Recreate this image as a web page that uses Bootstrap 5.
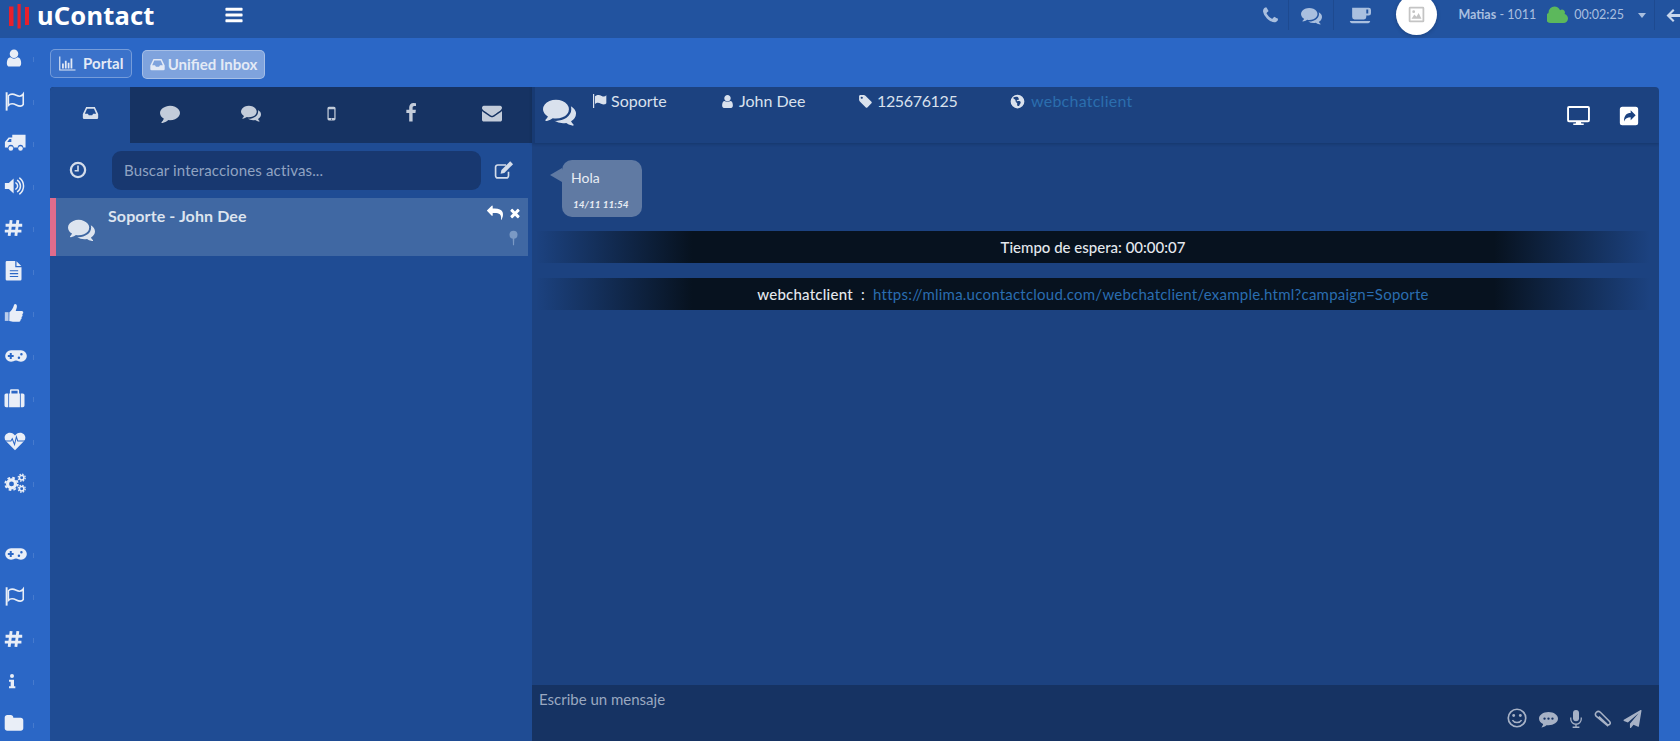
<!DOCTYPE html>
<html lang="es"><head><meta charset="utf-8"><title>uContact</title>
<link href="https://cdn.jsdelivr.net/npm/bootstrap@5.3.0/dist/css/bootstrap.min.css" rel="stylesheet">
<style>
html,body{height:741px;overflow:hidden}
body{background:#2b67c6;font-family:"Lato","Noto Sans",sans-serif;font-size:15px;color:#dfe5ef}
svg{fill:currentColor;flex:none;display:block}
.uc-top{height:38px;background:#22539f;color:#a9bfdf}
.uc-logo{width:224px;height:30px;padding-left:9px;color:#fff;font:700 25.5px/30px "Noto Sans",sans-serif;letter-spacing:.2px}
.uc-logo svg{margin-right:8px;color:#e8202c}
.uc-burger{color:#fff}
.uc-cell{height:30px;display:flex;align-items:center;justify-content:center;border-right:1px solid #1e4a90}
.uc-spacer{flex:1}
.uc-avatar{width:41px;height:41px;margin:-6px 0 0 10px;border-radius:50%;background:#fff;color:#c4c4c4;box-shadow:0 1px 4px rgba(0,0,0,.2)}
.uc-user{font-size:12.5px;color:#a9bfdf;white-space:nowrap;height:30px;padding-left:21px}
.uc-user b{font-weight:700}
.uc-cloudic{margin:0 6px 0 11px;color:#5cb85c}
.uc-caret{margin-left:14px}
.uc-side{width:50px;color:#e9eef7;margin-top:-1px}
.uc-sideitem{height:42.5px;padding-left:4px;display:flex;align-items:center;position:relative}
.uc-sideitem::after{content:"";position:absolute;left:33px;top:20px;width:1px;height:5px;background:rgba(255,255,255,.13)}
.uc-sidegap{height:28px}
.uc-crumbs{height:49px;padding-top:11px;gap:10px}
.uc-crumb{height:29px;padding:0 7px;font-weight:700;font-size:15px;border:1px solid rgba(255,255,255,.3);border-radius:5px;background:rgba(255,255,255,.08);color:#e3eaf6;--bs-btn-hover-color:#e3eaf6;gap:7px;letter-spacing:.1px}
.uc-crumb.uc-on{background:rgba(255,255,255,.4);margin-top:1px;gap:3px;letter-spacing:0}
.uc-panel{height:654px;margin-right:21px;border-radius:4px 4px 0 0;overflow:hidden}
.uc-left{width:482px;background:#1f4c94}
.uc-tabs{height:56px;background:#163363;color:#c3ccda;padding:0}
.uc-tab{flex:1 1 0;display:flex;justify-content:center;padding-top:2px;align-items:center;padding-bottom:6px}
.uc-tab.uc-on{background:#1f4c94;color:#d8e0ec}
.uc-search{height:55px;padding:8px 18px 9px 0;color:#d3dcea}
.uc-searchic{width:62px;padding-right:6px;display:flex;justify-content:center}
.uc-input{flex:1;height:39px;border:0;border-radius:9px;background:#183870;font-size:15px;letter-spacing:.15px;padding:0 12px;color:#90a3c2;margin-right:12px}
.uc-input::placeholder{color:#90a3c2;opacity:1}
.uc-item{height:58px;width:478px;background:#4068a3;border-left:6px solid #e06c8c;color:#dde4ef}
.uc-itemic{width:52px;padding:18px 0 0 12px}
.uc-itemtt{font-weight:700;font-size:16px;padding-top:8px;line-height:20px;letter-spacing:.1px}
.uc-itemact{padding:7px 6px 0 0;color:#fff}
.uc-itemtop{gap:5px}
.uc-pin{color:#7a99c4;margin-top:9px;margin-right:3px}
.uc-right{background:#1c4280;flex:1;min-width:0}
.uc-head{height:56px;border-left:3px solid #173a73;box-shadow:0 1px 3px rgba(10,25,55,.3);position:relative;color:#d9e1ed}
.uc-headmain{padding:0 0 0 8px}
.uc-meta{font-size:16px;line-height:20px;padding-top:4px;gap:4px;white-space:nowrap}
.uc-num{letter-spacing:-.35px}
.uc-meta-link{color:#2b6eae;letter-spacing:.25px;margin-left:2px}
.uc-headact{padding:19px 20px 0 0;gap:29px;color:#fff}
.uc-chat{flex:1;padding-top:17px;min-height:0}
.uc-bubble{position:relative;width:80px;height:57px;margin:0 0 14px 30px;background:#607aa3;border-radius:10px;color:#e8edf4;padding:8px 9px;font-size:14px;line-height:20px}
.uc-bubble::before{content:"";position:absolute;left:-12px;top:8px;border:7px solid transparent;border-left:0;border-right:12px solid #607aa3}
.uc-date{font-size:10px;font-style:italic;font-weight:700;line-height:12px;margin-top:10px;padding-left:2px;white-space:nowrap}
.uc-bar{height:32px;margin:0 9px 15px 4px;font-size:15px;line-height:32px;text-align:center;background:linear-gradient(90deg,transparent,#07121f 14%,#07121f 86%,transparent);color:#e4e8ee}
.uc-bar.uc-wide{letter-spacing:.23px}
.uc-bar a{color:#2a6db0;text-decoration:none}
.uc-bar b{font-weight:500}
.uc-foot{height:56px;background:#163363;padding:3px 7px;color:#9aa8c0;position:relative;font-size:15px}
.uc-footic{position:absolute;right:17px;bottom:13px;gap:12px;color:#a7b2c6}
.uc-sep{width:1px;height:30px;background:#1e4a90}
.uc-wcell{width:37px}
.uc-mcell{width:45px}
.uc-ccell{width:52px}
.uc-back{height:30px;padding-left:10px;color:#c8d6ec}
.uc-w1{margin-left:15px;width:129px}
.uc-w2{width:138px}
.uc-w3{width:152px}
</style></head>
<body>
<svg width="0" height="0" class="position-absolute">
<defs>
<symbol id="i-comment" viewBox="0 0 1792 1792"><path d="M1792 896q0 174-120 321.5t-326 233-450 85.5q-70 0-145-8-198 175-460 242-49 14-114 22-17 2-30.5-9t-17.5-29v-1q-3-4-.5-12t2-10 4.5-9.5l6-9 7-8.5 8-9q7-8 31-34.5t34.5-38 31-39.5 32.5-51 27-59 26-76q-157-89-247.5-220t-90.5-281q0-130 71-248.5t191-204.5 286-136.5 348-50.5q244 0 450 85.5t326 233 120 321.5z"/></symbol>
<symbol id="i-comments" viewBox="0 0 1792 1792"><path d="M1408 768q0 139-94 257t-256.5 186.5-353.5 68.5q-86 0-176-16-124 88-278 128-36 9-86 16h-3q-11 0-20.5-8t-11.5-21q-1-3-1-6.5t.5-6.5 2-6l2.5-5 3.5-5.5 4-5 4.5-5 4-4.5q5-6 23-25t26-29.5 22.5-29 25-38.5 20.5-44q-124-72-195-177t-71-224q0-139 94-257t256.5-186.5 353.5-68.5 353.5 68.5 256.5 186.5 94 257zm384 256q0 120-71 224.5t-195 176.5q10 24 20.5 44t25 38.5 22.5 29 26 29.5 23 25q1 1 4 4.5t4.5 5 4 5 3.5 5.5l2.5 5 2 6 .5 6.5-1 6.5q-3 14-13 22t-22 7q-50-7-86-16-154-40-278-128-90 16-176 16-271 0-472-132 58 4 88 4 161 0 309-45t264-129q125-92 192-212t67-254q0-77-23-152 129 71 204 178t75 230z"/></symbol>
<symbol id="i-user" viewBox="0 0 1792 1792"><path d="M1536 1399q0 109-62.5 187t-150.5 78h-854q-88 0-150.5-78t-62.5-187q0-85 8.5-160.5t31.5-152 58.5-131 94-89 134.5-34.5q131 128 313 128t313-128q76 0 134.5 34.5t94 89 58.5 131 31.5 152 8.5 160.5zm-256-887q0 159-112.5 271.5t-271.5 112.5-271.5-112.5-112.5-271.5 112.5-271.5 271.5-112.5 271.5 112.5 112.5 271.5z"/></symbol>
<symbol id="i-envelope" viewBox="0 0 1792 1792"><path d="M1792 710v794q0 66-47 113t-113 47h-1472q-66 0-113-47t-47-113v-794q44 49 101 87 362 246 497 345 57 42 92.5 65.5t94.5 48 110 24.5h2q51 0 110-24.5t94.5-48 92.5-65.5q170-123 498-345 57-39 100-87zm0-294q0 79-49 151t-122 123q-376 261-468 325-10 7-42.5 30.5t-54 38-52 32.5-57.5 27-50 9h-2q-23 0-50-9t-57.5-27-52-32.5-54-38-42.5-30.5q-91-64-262-182.5t-205-142.5q-62-42-117-115.5t-55-136.5q0-78 41.5-130t118.5-52h1472q65 0 112.5 47t47.5 113z"/></symbol>
<symbol id="i-phone" viewBox="0 0 1792 1792"><path d="M1600 1240q0 27-10 70.5t-21 68.5q-21 50-122 106-94 51-186 51-27 0-53-3.5t-57.5-12.5-47-14.5-55.5-20.5-49-18q-98-35-175-83-127-79-264-216t-216-264q-48-77-83-175-3-9-18-49t-20.5-55.5-14.5-47-12.5-57.5-3.5-53q0-92 51-186 56-101 106-122 25-11 68.5-21t70.5-10q14 0 21 3 18 6 53 76 11 19 30 54t35 63.5 31 53.5q3 4 17.5 25t21.5 35.5 7 28.5q0 20-28.5 50t-62 55-62 53-28.5 46q0 9 5 22.5t8.5 20.5 14 24 11.5 19q76 137 174 235t235 174q2 1 19 11.5t24 14 20.5 8.5 22.5 5q18 0 46-28.5t53-62 55-62 50-28.5q14 0 28.5 7t35.5 21.5 25 17.5q25 15 53.5 31t63.5 35 54 30q70 35 76 53 3 7 3 21z"/></symbol>
<symbol id="i-times" viewBox="0 0 1792 1792"><path d="M1490 1322q0 40-28 68l-136 136q-28 28-68 28t-68-28l-294-294-294 294q-28 28-68 28t-68-28l-136-136q-28-28-28-68t28-68l294-294-294-294q-28-28-28-68t28-68l136-136q28-28 68-28t68 28l294 294 294-294q28-28 68-28t68 28l136 136q28 28 28 68t-28 68l-294 294 294 294q28 28 28 68z"/></symbol>
<symbol id="i-reply" viewBox="0 0 1792 1792"><path d="M1792 1120q0 166-127 451-3 7-10.5 24t-13.5 30-13 22q-12 17-28 17-15 0-23.5-10t-8.5-25q0-9 2.5-26.5t2.5-23.5q5-68 5-123 0-101-17.5-181t-48.5-138.5-80-101-105.5-69.5-133-42.5-154-21.5-175.5-6h-224v256q0 26-19 45t-45 19-45-19l-512-512q-19-19-19-45t19-45l512-512q19-19 45-19t45 19 19 45v256h224q713 0 875 403 53 134 53 333z"/></symbol>
<symbol id="i-plane" viewBox="0 0 1792 1792"><path d="M1764 11q33 24 27 64l-256 1536q-5 29-32 45-14 8-31 8-11 0-24-5l-453-185-242 295q-18 23-49 23-13 0-22-4-19-7-30.5-23.5t-11.5-36.5v-349l864-1059-1069 925-395-162q-37-14-40-55-2-40 32-59l1664-960q15-9 32-9 20 0 36 11z"/></symbol>
<symbol id="i-tag" viewBox="0 0 1792 1792"><path d="M576 448q0-53-37.5-90.5t-90.5-37.5-90.5 37.5-37.5 90.5 37.5 90.5 90.5 37.5 90.5-37.5 37.5-90.5zm1067 576q0 53-37 90l-491 492q-39 37-91 37-53 0-90-37l-715-716q-38-37-64.5-101t-26.5-117v-416q0-52 38-90t90-38h416q53 0 117 26.5t102 64.5l715 714q37 39 37 91z"/></symbol>
<symbol id="i-folder" viewBox="0 0 1792 1792"><path d="M1728 608v704q0 92-66 158t-158 66h-1216q-92 0-158-66t-66-158v-960q0-92 66-158t158-66h320q92 0 158 66t66 158v32h672q92 0 158 66t66 158z"/></symbol>
<symbol id="i-cloud" viewBox="0 0 1792 1792"><path d="M1792 1152q0 159-112.5 271.5t-271.5 112.5h-1088q-185 0-316.5-131.5t-131.5-316.5q0-132 71-241.5t187-163.5q-2-28-2-43 0-212 150-362t362-150q158 0 286.5 88t187.5 230q70-62 166-62 106 0 181 75t75 181q0 75-41 138 129 30 213 134.5t84 239.5z"/></symbol>
<symbol id="i-bars" viewBox="0 0 1792 1792"><path d="M1664 1344v128q0 26-19 45t-45 19h-1408q-26 0-45-19t-19-45v-128q0-26 19-45t45-19h1408q26 0 45 19t19 45zm0-512v128q0 26-19 45t-45 19h-1408q-26 0-45-19t-19-45v-128q0-26 19-45t45-19h1408q26 0 45 19t19 45zm0-512v128q0 26-19 45t-45 19h-1408q-26 0-45-19t-19-45v-128q0-26 19-45t45-19h1408q26 0 45 19t19 45z"/></symbol>
<symbol id="i-fb" viewBox="0 0 1792 1792"><path d="M1343 12v264h-157q-86 0-116 36t-30 108v189h293l-39 296h-254v759h-306v-759h-255v-296h255v-218q0-186 104-288.5t277-102.5q147 0 228 12z"/></symbol>
<symbol id="i-flag-o" viewBox="0 0 24 24"><path d="M3 2v21" fill="none" stroke="currentColor" stroke-width="2.200"/><path d="M5 6c3-3 6-2 9-.5s6 1.500 8-1.500v12c-2 3-5 2-8 .5s-6-2.500-9 .5z" fill="none" stroke="currentColor" stroke-width="1.800"/></symbol>
<symbol id="i-flag" viewBox="0 0 24 24"><path d="M3 1.500h1.800v21H3z"/><path d="M6 5c4-3 7-2 10-.5s5 1 7-1v12c-2 2.500-5 2-8 .5s-6-2.500-9 .5z"/></symbol>
<symbol id="i-truck" viewBox="0 0 24 24"><path fill-rule="evenodd" d="M9 3h14.500v14H21a3 3 0 0 0-6 0h-4.500a3 3 0 0 0-6 0H1v-6l4-5h4zM3.500 11H8V7.500H6z"/><circle cx="7.500" cy="18" r="2.500"/><circle cx="18" cy="18" r="2.500"/></symbol>
<symbol id="i-volume" viewBox="0 0 24 24"><path d="M1 8.500h4.500L11 3.500v17l-5.500-5H1z"/><path d="M13.500 8.500a4 4 0 0 1 0 7M15.500 5.500a8 8 0 0 1 0 13M18 3a11.500 11.500 0 0 1 0 18" fill="none" stroke="currentColor" stroke-width="1.700" stroke-linecap="round"/></symbol>
<symbol id="i-file" viewBox="0 0 24 24"><path fill-rule="evenodd" d="M3 0h10.500v7.500H21V22a1.500 1.500 0 0 1-1.500 1.500h-16A1.500 1.500 0 0 1 2 22V1.500A1.500 1.500 0 0 1 3 0zM7 11v1.300h10V11zM7 14.500v1.300h10v-1.300zM7 18v1.300h10V18z"/><path d="M15 .3 20.700 6H15z"/></symbol>
<symbol id="i-thumb" viewBox="0 0 24 24"><path d="M1 11h4.500v10.500H1z" opacity=".75"/><path d="M6.500 11c2.500-1.500 4.500-4.500 5.500-8.500.5-2 3.500-1.500 3.500 1.500 0 2-.8 3.500-1.500 5.500h7c2.500 0 2.800 3 .8 3.800 1 1.300.5 3-.8 3.500.5 1.500 0 2.800-1.200 3.200.2 1.700-.8 2.500-2.500 2.500h-5c-2.500 0-3.500-1-6-1z"/></symbol>
<symbol id="i-game" viewBox="0 0 28 24"><path fill-rule="evenodd" d="M8 5h12a7 7 0 0 1 0 14c-2.500 0-3.500-1.500-6-1.500S10.500 19 8 19A7 7 0 0 1 8 5zM6.500 8.500v2.300H4.200v2.400h2.300v2.300h2.400v-2.300h2.300v-2.400H8.900V8.500zM20.500 8.500a1.500 1.500 0 1 0 0 3 1.500 1.500 0 0 0 0-3zM17.500 12.500a1.500 1.500 0 1 0 0 3 1.500 1.500 0 0 0 0-3z"/></symbol>
<symbol id="i-case" viewBox="0 0 24 24"><path fill-rule="evenodd" d="M8 1.500h8A1.500 1.500 0 0 1 17.500 3v3.500H22a2 2 0 0 1 2 2V21a2 2 0 0 1-2 2H2a2 2 0 0 1-2-2V8.500a2 2 0 0 1 2-2h4.500V3A1.500 1.500 0 0 1 8 1.500zM8.300 3.300v3.200h7.400V3.300zM4.500 6.500V23h1V6.500zM18.500 6.500V23h1V6.500z"/></symbol>
<symbol id="i-heart" viewBox="0 0 24 24"><path d="M12 22 2 12C-1 8.500 1.500 3 6.500 3c2.500 0 4.200 1.300 5.500 3 1.300-1.700 3-3 5.500-3C22.500 3 25 8.500 22 12z"/><path d="M1 12h6.500l1.500-2.500 2.500 6.500 2-8.500 1.500 4.500H23" fill="none" stroke="#2b67c6" stroke-width="1.100"/></symbol>
<symbol id="i-cogs" viewBox="0 0 26 24"><g fill="none" stroke="currentColor"><circle cx="8.500" cy="13" r="4.500" stroke-width="3.500"/><circle cx="8.500" cy="13" r="7" stroke-width="2.200" stroke-dasharray="3 2.500"/><circle cx="20" cy="6" r="2.500" stroke-width="1.700"/><circle cx="20" cy="6" r="4" stroke-width="1.400" stroke-dasharray="1.700 1.450"/><circle cx="20" cy="18.500" r="2.500" stroke-width="1.700"/><circle cx="20" cy="18.500" r="4" stroke-width="1.400" stroke-dasharray="1.700 1.450"/></g></symbol>
<symbol id="i-hash" viewBox="0 0 24 24"><path d="M9 2 6.500 22M17.500 2 15 22M2 8.500h21M1 16h21" fill="none" stroke="currentColor" stroke-width="3.600"/></symbol>
<symbol id="i-info" viewBox="0 0 24 24"><circle cx="12" cy="4.500" r="3"/><path d="M7.500 10h7.500v10h2v3H7.500v-3h2.500v-7H7.500z"/></symbol>
<symbol id="i-chart" viewBox="0 0 24 24"><path d="M1 2h1.600v18.500H24V22H1z"/><path d="M5 12h2.500v7H5zM9 8h2.500v11H9zM13 11h2.500v8H13zM17 5h2.500v14H17z"/></symbol>
<symbol id="i-inbox" viewBox="0 0 24 24"><path fill-rule="evenodd" d="M5.500 3h13l5 10.500V19a2 2 0 0 1-2 2h-19a2 2 0 0 1-2-2v-5.500zM6.800 5.500 3.500 13H8l1.500 2.500h5L16 13h4.500l-3.300-7.500z"/></symbol>
<symbol id="i-mobile" viewBox="0 0 24 24"><path fill-rule="evenodd" d="M8 1h8a2.500 2.500 0 0 1 2.500 2.500v17A2.500 2.500 0 0 1 16 23H8a2.500 2.500 0 0 1-2.500-2.500v-17A2.500 2.500 0 0 1 8 1zM7.500 5v14h9V5zM12 19.800a1 1 0 1 0 0 2 1 1 0 0 0 0-2z"/></symbol>
<symbol id="i-clock" viewBox="0 0 24 24"><circle cx="12" cy="12" r="9.500" fill="none" stroke="currentColor" stroke-width="3"/><path d="M12 6v7H7.500" fill="none" stroke="currentColor" stroke-width="2.200"/></symbol>
<symbol id="i-edit" viewBox="0 0 24 24"><path d="M18 14v5a2.500 2.500 0 0 1-2.500 2.500H5A2.500 2.500 0 0 1 2.500 19V8.500A2.500 2.500 0 0 1 5 6h10" fill="none" stroke="currentColor" stroke-width="2"/><path d="M20 1.500 23.500 5 13 15.500l-4.500 1 1-4.500z"/></symbol>
<symbol id="i-pin" viewBox="0 0 16 24"><circle cx="8" cy="7" r="6"/><path d="M6.800 12h2.400l-.4 11H7.200z"/></symbol>
<symbol id="i-coffee" viewBox="0 0 28 24"><path fill-rule="evenodd" d="M4 2h21a3 3 0 0 1 3 3v4a3 3 0 0 1-3 3h-3v2a3 3 0 0 1-3 3H7a3 3 0 0 1-3-3zM22 4.500V9.500h2.500V4.500z"/><path d="M1 19h26c0 2-2 3-4 3H5c-2 0-4-1-4-3z"/></symbol>
<symbol id="i-pic" viewBox="0 0 24 24"><path fill-rule="evenodd" d="M3 1h18a2 2 0 0 1 2 2v18a2 2 0 0 1-2 2H3a2 2 0 0 1-2-2V3a2 2 0 0 1 2-2zM3.500 3.500v17h17v-17zM5 18l4-6 3 3 3-5 4 8zM8 6a2 2 0 1 1 0 4 2 2 0 0 1 0-4z"/></symbol>
<symbol id="i-globe" viewBox="0 0 24 24"><path fill-rule="evenodd" d="M12 1a11 11 0 1 1 0 22 11 11 0 0 1 0-22zM5 6c1 3 4 2 4 5s3 2 2.500 5 1.500 4 3 3c1-3 3-4 2.500-6s-4-2-6-1c-1-2 1-3 3-3 1-2-1-2-1-4-3-1-6-.5-8 1z"/></symbol>
<symbol id="i-monitor" viewBox="0 0 24 20"><path fill-rule="evenodd" d="M2 0h20a2 2 0 0 1 2 2v13a2 2 0 0 1-2 2h-7.500l.5 1.500h2.500V20h-11v-1.500H9l.5-1.500H2a2 2 0 0 1-2-2V2a2 2 0 0 1 2-2zM2 2v13h20V2z"/></symbol>
<symbol id="i-share" viewBox="0 0 24 24"><path fill-rule="evenodd" d="M4 1h16a3 3 0 0 1 3 3v16a3 3 0 0 1-3 3H4a3 3 0 0 1-3-3V4a3 3 0 0 1 3-3zM14 5v3.500c-5 0-8 3-8 10 1.500-3.500 4-5 8-5V17l6-6z"/></symbol>
<symbol id="i-smile" viewBox="0 0 24 24"><circle cx="12" cy="12" r="10.500" fill="none" stroke="currentColor" stroke-width="2"/><circle cx="8" cy="9" r="1.700"/><circle cx="16" cy="9" r="1.700"/><path d="M6.500 14.500c2.500 4 8.500 4 11 0" fill="none" stroke="currentColor" stroke-width="1.800"/></symbol>
<symbol id="i-dots" viewBox="0 0 24 22"><path fill-rule="evenodd" d="M12 2c6.600 0 12 3.600 12 8.500S18.600 19 12 19c-1 0-1.800 0-2.600-.2C7.500 20.500 5 21.500 3 21.700c1-1.200 2-2.700 2.200-4.300C2 16 0 13.500 0 10.500 0 5.600 5.400 2 12 2zM7 9a1.500 1.500 0 1 0 0 3 1.500 1.500 0 0 0 0-3zM12 9a1.500 1.500 0 1 0 0 3 1.500 1.500 0 0 0 0-3zM17 9a1.500 1.500 0 1 0 0 3 1.500 1.500 0 0 0 0-3z"/></symbol>
<symbol id="i-mic" viewBox="0 0 16 24"><rect x="4" y="0" width="8" height="15" rx="4"/><path d="M1 10v2a7 7 0 0 0 14 0v-2M8 19v3M3.500 23h9" fill="none" stroke="currentColor" stroke-width="1.700"/></symbol>
<symbol id="i-clip" viewBox="0 0 24 24"><path d="M20 22 3 8C0 4 5-1 9 2.500l13 13c2.500 3-1 6-3.500 4L7 8.500" fill="none" stroke="currentColor" stroke-width="2.200"/></symbol>
<symbol id="i-logo" viewBox="0 0 20 26"><path d="M0 4h4.500v19.500H0zM8.500 1.500h3.200V26H8.500zM16 4.500h4v18h-4z"/></symbol>
</defs></svg>

<header class="uc-top d-flex align-items-start">
  <div class="uc-logo d-flex align-items-center"><svg width="20" height="27"><use href="#i-logo"/></svg>uContact</div>
  <svg class="uc-burger mt-1" width="20" height="22"><use href="#i-bars"/></svg>
  <div class="uc-spacer"></div>
  <div class="d-flex align-items-start">
    <div class="uc-cell uc-wcell"><svg width="19" height="19"><use href="#i-phone"/></svg></div>
    <div class="uc-cell uc-mcell"><svg width="21" height="21"><use href="#i-comments"/></svg></div>
    <div class="uc-cell uc-ccell border-0"><svg width="22" height="19"><use href="#i-coffee"/></svg></div>
    <div class="uc-avatar d-flex align-items-center justify-content-center"><svg width="17" height="17"><use href="#i-pic"/></svg></div>
    <div class="uc-user d-flex align-items-center"><b>Matias</b>&nbsp;- 1011
      <svg class="uc-cloudic" width="21" height="21"><use href="#i-cloud"/></svg>
      <span>00:02:25</span>
      <svg class="uc-caret" width="8" height="5" viewBox="0 0 10 6"><path d="M0 0h10L5 6z"/></svg>
    </div>
    <div class="uc-sep ms-2"></div>
    <div class="uc-back d-flex align-items-center"><svg width="15" height="15" viewBox="0 0 15 15"><path d="M8 1 1.500 7.500 8 14l1.500-1.500-3.500-3.500H15V6H6l3.500-3.500z"/></svg></div>
  </div>
</header>

<div class="d-flex">
  <nav class="uc-side d-flex flex-column">
    <div class="uc-sideitem"><svg width="20" height="20"><use href="#i-user"/></svg></div>
    <div class="uc-sideitem"><svg width="21" height="22"><use href="#i-flag-o"/></svg></div>
    <div class="uc-sideitem"><svg width="22" height="22"><use href="#i-truck"/></svg></div>
    <div class="uc-sideitem"><svg width="21" height="22"><use href="#i-volume"/></svg></div>
    <div class="uc-sideitem"><svg width="19" height="20"><use href="#i-hash"/></svg></div>
    <div class="uc-sideitem"><svg width="20" height="20"><use href="#i-file"/></svg></div>
    <div class="uc-sideitem"><svg width="20" height="20"><use href="#i-thumb"/></svg></div>
    <div class="uc-sideitem"><svg width="24" height="20"><use href="#i-game"/></svg></div>
    <div class="uc-sideitem"><svg width="21" height="20"><use href="#i-case"/></svg></div>
    <div class="uc-sideitem"><svg width="22" height="22"><use href="#i-heart"/></svg></div>
    <div class="uc-sideitem"><svg width="23" height="22"><use href="#i-cogs"/></svg></div>
    <div class="uc-sidegap"></div>
    <div class="uc-sideitem"><svg width="24" height="20"><use href="#i-game"/></svg></div>
    <div class="uc-sideitem"><svg width="21" height="22"><use href="#i-flag-o"/></svg></div>
    <div class="uc-sideitem"><svg width="19" height="20"><use href="#i-hash"/></svg></div>
    <div class="uc-sideitem"><svg width="16" height="18"><use href="#i-info"/></svg></div>
    <div class="uc-sideitem"><svg width="20" height="21"><use href="#i-folder"/></svg></div>
  </nav>
  <main class="flex-grow-1">
    <div class="uc-crumbs d-flex align-items-start">
      <a class="btn uc-crumb d-inline-flex align-items-center" href="#"><svg width="18" height="17"><use href="#i-chart"/></svg>Portal</a>
      <a class="btn uc-crumb uc-on d-inline-flex align-items-center" href="#"><svg width="15" height="15"><use href="#i-inbox"/></svg>Unified Inbox</a>
    </div>
    <div class="uc-panel d-flex">
      <section class="uc-left d-flex flex-column">
        <ul class="nav uc-tabs list-unstyled m-0">
          <li class="uc-tab uc-on"><svg width="17" height="16"><use href="#i-inbox"/></svg></li>
          <li class="uc-tab"><svg width="20" height="20"><use href="#i-comment"/></svg></li>
          <li class="uc-tab"><svg width="20" height="20"><use href="#i-comments"/></svg></li>
          <li class="uc-tab"><svg width="15" height="15"><use href="#i-mobile"/></svg></li>
          <li class="uc-tab"><svg width="20" height="20"><use href="#i-fb"/></svg></li>
          <li class="uc-tab"><svg width="20" height="20"><use href="#i-envelope"/></svg></li>
        </ul>
        <div class="uc-search d-flex align-items-center">
          <div class="uc-searchic"><svg width="18" height="18"><use href="#i-clock"/></svg></div>
          <input class="form-control uc-input" type="text" placeholder="Buscar interacciones activas...">
          <svg width="21" height="20"><use href="#i-edit"/></svg>
        </div>
        <div class="uc-item d-flex">
          <div class="uc-itemic"><svg width="27" height="27"><use href="#i-comments"/></svg></div>
          <div class="uc-itemtt flex-grow-1">Soporte - John Dee</div>
          <div class="uc-itemact d-flex flex-column align-items-end">
            <div class="uc-itemtop d-flex align-items-center"><svg width="16" height="16"><use href="#i-reply"/></svg><svg width="14" height="14"><use href="#i-times"/></svg></div>
            <svg class="uc-pin" width="11" height="16"><use href="#i-pin"/></svg>
          </div>
        </div>
      </section>
      <section class="uc-right d-flex flex-column">
        <div class="uc-head d-flex">
          <div class="uc-headmain d-flex flex-grow-1 align-items-start">
            <svg class="mt-2" width="33" height="33"><use href="#i-comments"/></svg>
            <div class="uc-meta uc-w1 d-flex align-items-center"><svg width="16" height="16"><use href="#i-flag"/></svg>Soporte</div>
            <div class="uc-meta uc-w2 d-flex align-items-center"><svg width="15" height="15"><use href="#i-user"/></svg>John Dee</div>
            <div class="uc-meta uc-w3 d-flex align-items-center"><svg width="15" height="15"><use href="#i-tag"/></svg><span class="uc-num">125676125</span></div>
            <div class="uc-meta d-flex align-items-center"><svg width="15" height="15"><use href="#i-globe"/></svg><span class="uc-meta-link">webchatclient</span></div>
          </div>
          <div class="uc-headact d-flex align-items-start">
            <svg width="23" height="19"><use href="#i-monitor"/></svg>
            <svg width="20" height="20"><use href="#i-share"/></svg>
          </div>
        </div>
        <div class="uc-chat">
          <div class="uc-bubble">Hola<div class="uc-date">14/11 11:54</div></div>
          <div class="uc-bar"><b>Tiempo de espera: 00:00:07</b></div>
          <div class="uc-bar uc-wide"><b>webchatclient</b> &nbsp;:&nbsp; <a href="#">https://mlima.ucontactcloud.com/webchatclient/example.html?campaign=Soporte</a></div>
        </div>
        <div class="uc-foot">Escribe un mensaje
          <div class="uc-footic d-flex align-items-end">
            <svg width="20" height="20"><use href="#i-smile"/></svg>
            <svg width="19" height="18"><use href="#i-dots"/></svg>
            <svg width="12" height="18"><use href="#i-mic"/></svg>
            <svg width="17" height="18"><use href="#i-clip"/></svg>
            <svg width="19" height="18"><use href="#i-plane"/></svg>
          </div>
        </div>
      </section>
    </div>
  </main>
</div>
</body></html>
